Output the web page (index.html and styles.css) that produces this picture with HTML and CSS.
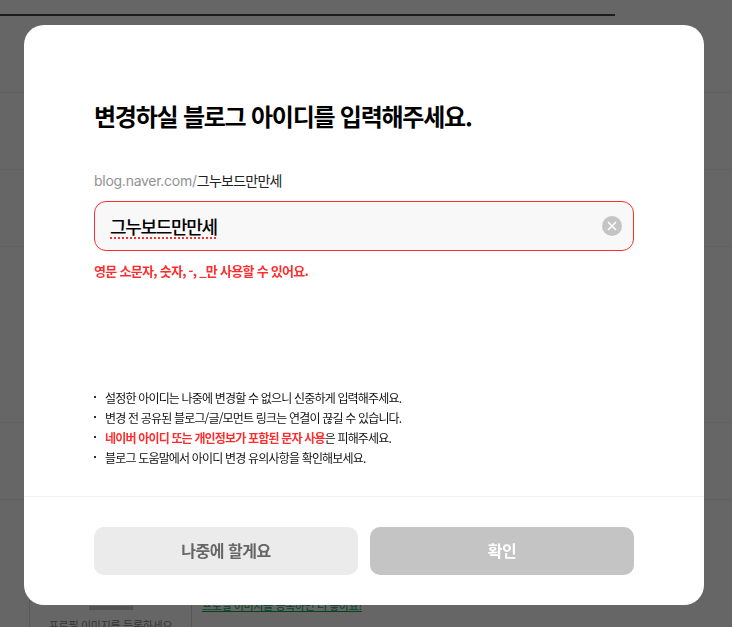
FILE: index.html
```html
<!DOCTYPE html>
<html lang="ko">
<head>
<meta charset="utf-8">
<title>블로그 아이디 변경</title>
<link rel="stylesheet" href="styles.css">
</head>
<body>
<div class="page">
  <div class="top-rule"></div>
  <div class="row"></div>
  <div class="row"></div>
  <div class="row"></div>
  <div class="row row-tall"></div>
  <div class="row"></div>
  <div class="profile">
    <div class="profile-side">
      <div class="thumb"></div>
      <p class="profile-note">프로필 이미지를 등록하세요</p>
    </div>
    <div class="profile-main">
      <a class="profile-link">프로필 이미지를 등록하면 더 좋아요!</a>
    </div>
  </div>
</div>
<div class="overlay">
  <section class="modal">
    <div class="modal-body">
      <h1 class="title">변경하실 블로그 아이디를 입력해주세요.</h1>
      <p class="url"><span class="url-base">blog.naver.com/</span>그누보드만만세</p>
      <div class="field">
        <span class="field-value">그누보드만만세</span>
        <button class="clear" type="button" aria-label="지우기">
          <svg width="20" height="20" viewBox="0 0 20 20"><circle cx="10" cy="10" r="10" fill="#c4c4c4"/><path d="M6 6l8 8M14 6l-8 8" stroke="#fff" stroke-width="1.5" fill="none"/></svg>
        </button>
      </div>
      <p class="error">영문 소문자, 숫자, -, _만 사용할 수 있어요.</p>
      <ul class="notes">
        <li>설정한 아이디는 나중에 변경할 수 없으니 신중하게 입력해주세요.</li>
        <li>변경 전 공유된 블로그/글/모먼트 링크는 연결이 끊길 수 있습니다.</li>
        <li><strong class="warn">네이버 아이디 또는 개인정보가 포함된 문자 사용</strong>은 피해주세요.</li>
        <li>블로그 도움말에서 아이디 변경 유의사항을 확인해보세요.</li>
      </ul>
    </div>
    <div class="modal-foot">
      <button class="btn btn-later" type="button">나중에 할게요</button>
      <button class="btn btn-ok" type="button">확인</button>
    </div>
  </section>
</div>
</body>
</html>
```
FILE: styles.css
```css
* { box-sizing: border-box; }
html, body { margin: 0; padding: 0; height: 100%; overflow: hidden; }
body { font-family: "Noto Sans CJK KR", "Noto Sans", sans-serif; background: #fff; }

.page { height: 627px; overflow: hidden; padding-top: 14px; }
.top-rule { width: 615px; height: 2px; background: #464646; }
.row { height: 77px; border-bottom: 1px solid #f0f0f0; }
.row-tall { height: 176px; }
.profile { display: flex; margin-left: 29px; height: 200px; }
.profile-side { width: 163px; border-left: 1px solid #ddd; border-right: 1px solid #ddd; padding-top: 106px; text-align: center; }
.thumb { width: 44px; height: 4px; background: #ccc; margin: 0 auto; }
.profile-note { margin: 7px 0 0; font-size: 11px; line-height: 16px; color: #888; letter-spacing: -.3px; }
.profile-main { padding: 91px 0 0 10px; }
.profile-link { font-size: 11px; line-height: 16px; color: #03a94d; text-decoration: underline; letter-spacing: -.4px; }

.overlay { position: fixed; inset: 0; background: rgba(0,0,0,.6); display: flex; justify-content: center; align-items: flex-start; padding: 25px 4px 0 0; }
.modal { width: 680px; height: 580px; background: #fff; border-radius: 20px; display: flex; flex-direction: column; }
.modal-body { height: 472px; padding: 74px 70px 0; border-bottom: 1px solid #f1f1f1; }
.title { margin: 0; font-size: 24px; line-height: 34px; font-weight: 700; color: #000; letter-spacing: -1.23px; }
.url { margin: 37px 0 0; font-size: 14px; line-height: 20px; color: #222; letter-spacing: -.75px; }
.url-base { color: #929292; letter-spacing: -.27px; font-family: "Inter", "Noto Sans", sans-serif; }
.field { margin-top: 10px; height: 50px; border: 1px solid #ff2e2e; border-radius: 12px; background: #f8f8f8; display: flex; align-items: center; justify-content: space-between; padding: 0 11px 0 15px; }
.field-value { font-size: 18px; font-weight: 500; color: #000; letter-spacing: -1.3px; text-decoration: underline dotted #ff2e2e 2px; text-underline-offset: 3px; }
.clear { width: 20px; height: 20px; padding: 0; border: 0; background: none; display: block; }
.clear svg { display: block; }
.error { margin: 10px 0 0; font-size: 13px; line-height: 20px; font-weight: 700; color: #ff2e2e; letter-spacing: -.71px; }
.notes { list-style: none; margin: 107px 0 0; padding: 0; font-size: 12px; line-height: 20px; color: #111; letter-spacing: -.82px; }
.notes li { position: relative; padding-left: 11px; height: 20px; }
.notes li::before { content: ""; position: absolute; left: 0; top: 8px; width: 2px; height: 2px; background: #333; }
.warn { color: #ff2e2e; font-weight: 700; }

.modal-foot { display: flex; gap: 12px; padding: 30px 70px 0; }
.btn { flex: 1; height: 48px; border: 0; border-radius: 10px; padding: 0 0 2px; font-family: inherit; font-size: 16px; font-weight: 700; letter-spacing: -.45px; }
.btn-later { background: #ebebeb; color: #666; }
.btn-ok { background: #c4c4c4; color: #fff; }
```
